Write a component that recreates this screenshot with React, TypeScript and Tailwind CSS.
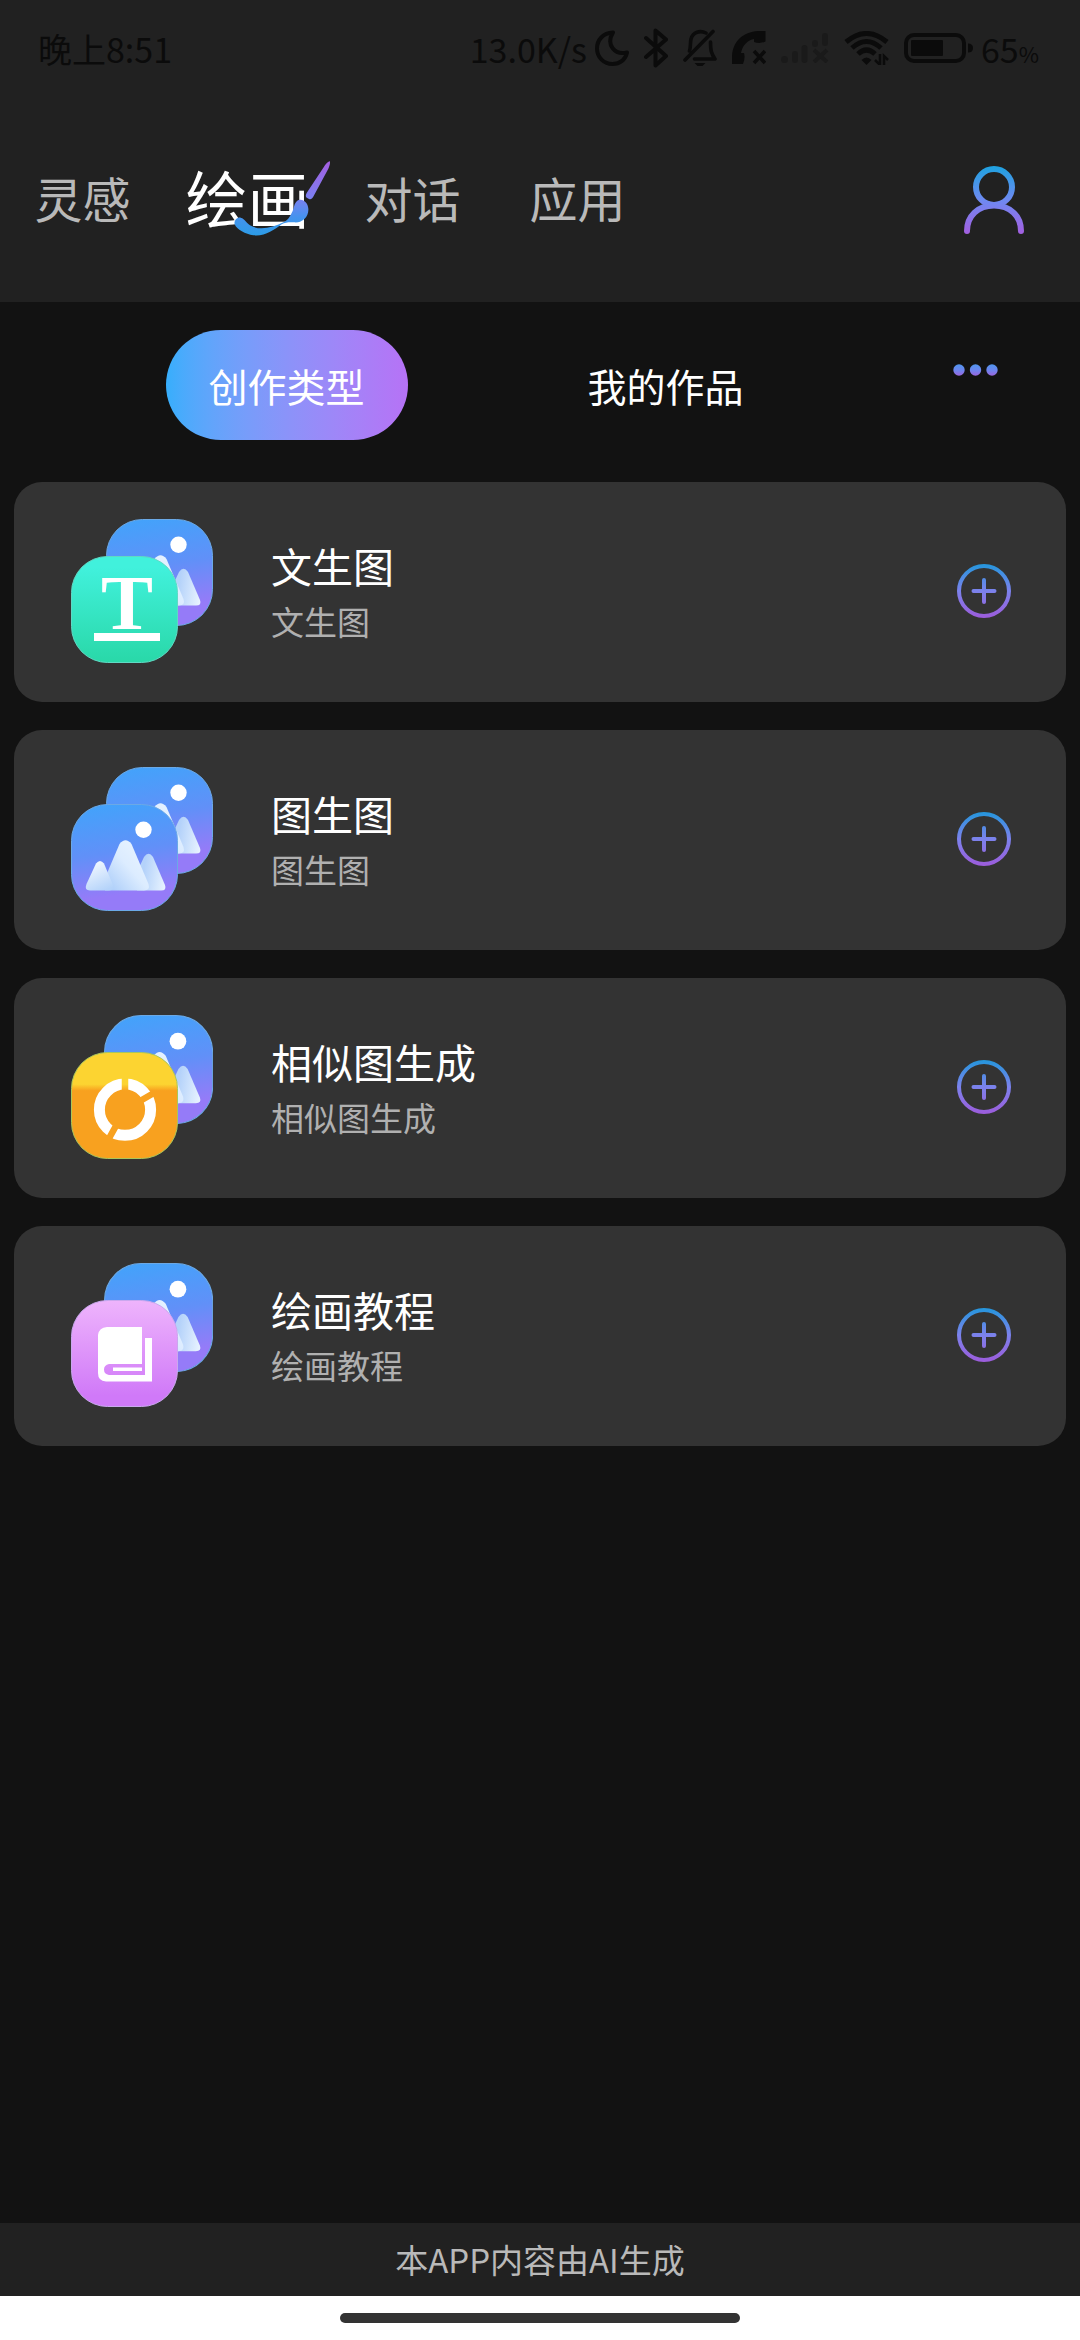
import { useState } from 'react'
import type { ReactNode } from 'react'

const tabs = ['灵感', '绘画', '对话', '应用']

const sections = ['创作类型', '我的作品']

const items = [
  { id: 'text', title: '文生图', description: '文生图' },
  { id: 'image', title: '图生图', description: '图生图' },
  { id: 'similar', title: '相似图生成', description: '相似图生成' },
  { id: 'tutorial', title: '绘画教程', description: '绘画教程' },
]

const Gradients = () => (
  <svg className="absolute h-0 w-0" aria-hidden="true">
    <defs>
      <linearGradient id="picture" x1="0" y1="0" x2="0.15" y2="1">
        <stop offset="0" stopColor="#40a4fb" />
        <stop offset="0.5" stopColor="#6190f8" />
        <stop offset="0.9" stopColor="#957bf8" />
      </linearGradient>
      <linearGradient id="peak" x1="0.3" y1="0" x2="0.7" y2="1">
        <stop offset="0" stopColor="#f4f9ff" />
        <stop offset="1" stopColor="#b4d3fa" />
      </linearGradient>
      <linearGradient id="peakFront" x1="1" y1="0.2" x2="0.2" y2="1">
        <stop offset="0" stopColor="#e9f4ff" />
        <stop offset="0.5" stopColor="#dcecff" />
        <stop offset="1" stopColor="#b0d0fa" />
      </linearGradient>
      <linearGradient id="peakSide" x1="0" y1="0.6" x2="1" y2="0.8">
        <stop offset="0.2" stopColor="#b4d2fa" />
        <stop offset="1" stopColor="#e8f3ff" />
      </linearGradient>
      <linearGradient id="green" x1="0" y1="0" x2="0" y2="1">
        <stop offset="0.1" stopColor="#41f1dc" />
        <stop offset="1" stopColor="#29d8a8" />
      </linearGradient>
      <linearGradient id="orange" x1="0" y1="0" x2="0" y2="1">
        <stop offset="0.3" stopColor="#fcd431" />
        <stop offset="0.36" stopColor="#f8a11f" />
      </linearGradient>
      <linearGradient id="pink" x1="0" y1="0" x2="0" y2="1">
        <stop offset="0" stopColor="#eeb4fc" />
        <stop offset="0.9" stopColor="#d079f8" />
      </linearGradient>
    </defs>
  </svg>
)

const MoonIcon = () => (
  <svg className="h-9 w-[34px]" viewBox="0 0 34 36" fill="none" stroke="currentColor" strokeWidth="4" strokeLinejoin="round">
    <path d="M18 2.5C8 3 2 10 2 18.500C2 27.500 9 34 17.500 34C25 34 30.500 29.500 32 22.500C20 25.500 10.500 15 18 2.500Z" />
  </svg>
)

const BluetoothIcon = () => (
  <svg className="h-10 w-6" viewBox="0 0 24 40" fill="none" stroke="currentColor" strokeWidth="4" strokeLinejoin="round" strokeLinecap="round">
    <path d="M2 10L22 28L11.500 37.500V2.500L22 11.500L2 29" />
  </svg>
)

const BellOffIcon = () => (
  <svg className="h-[38px] w-[34px]" viewBox="0 0 34 38" fill="none" stroke="currentColor" strokeWidth="3.6" strokeLinejoin="round" strokeLinecap="round">
    <path d="M2 31L30 2.500" />
    <path d="M6.500 22C8 17 7 14 8 10C10 3 17 1 23 4" />
    <path d="M27.500 13C27.500 21 28 24 32 30H11.500" />
    <path d="M11.500 34H22.500L19.500 37H14.500Z" fill="currentColor" stroke="none" />
  </svg>
)

const PhoneMissedIcon = () => (
  <svg className="h-[34px] w-[34px]" viewBox="0 0 34 34" fill="none">
    <path
      d="M0 33V25C1 10 11 1 26 0H33.500V10.500Q28 13 22 11V8C16 9 10.500 14 9 22H12Q13.500 27 11 33Z"
      fill="currentColor"
    />
    <path d="M22 20L33 32M33 20L22 32" stroke="currentColor" strokeWidth="3.6" />
  </svg>
)

const SignalIcon = () => (
  <svg className="h-[30px] w-12 text-[#1a1a1a]" viewBox="0 0 48 30" fill="currentColor">
    <circle cx="3.500" cy="26.500" r="3.500" />
    <rect x="11" y="18" width="6" height="12" rx="3" />
    <rect x="20.500" y="12" width="6" height="18" rx="3" />
    <rect x="31" y="7" width="6" height="7" rx="3" />
    <rect x="41" y="0" width="6" height="13" rx="3" />
    <path d="M33 17L46 29M46 17L33 29" stroke="currentColor" strokeWidth="4" />
  </svg>
)

const WifiIcon = () => (
  <svg className="h-[34px] w-[45px]" viewBox="0 0 45 34" fill="none" stroke="currentColor" strokeWidth="5">
    <path d="M2 11Q22.500 -6 43 11" />
    <path d="M8 17Q22.500 4 37 17" />
    <path d="M14 23Q22.500 15 31 23" />
    <path d="M17.500 29Q22.500 24 27.500 29L22.500 34Z" fill="currentColor" stroke="none" />
    <path d="M36 23V34L31 29M40 34V25L44 29" strokeWidth="2.500" />
  </svg>
)

const BatteryIcon = () => (
  <svg className="h-[30px] w-[69px]" viewBox="0 0 69 30" fill="none">
    <rect x="2" y="2" width="58" height="26" rx="8" stroke="currentColor" strokeWidth="4" />
    <rect x="7" y="7" width="32" height="16" rx="1" fill="currentColor" />
    <path d="M64 10.500Q69 10.500 69 15T64 19.500Z" fill="currentColor" />
  </svg>
)

const StatusBar = () => (
  <div className="flex h-[98px] items-center justify-between pb-0.5 pl-[38px] pr-[41px] text-[#0b0b0b]">
    <span className="text-[34px]">晚上8:51</span>
    <div className="flex items-center">
      <span className="mr-2 text-[34px]">13.0K/s</span>
      <div className="flex items-center gap-[15px]">
        <MoonIcon />
        <BluetoothIcon />
        <BellOffIcon />
        <PhoneMissedIcon />
        <SignalIcon />
        <WifiIcon />
        <BatteryIcon />
      </div>
      <span className="ml-2 text-[34px]">
        65<span className="text-[22px]">%</span>
      </span>
    </div>
  </div>
)

const Brush = () => (
  <svg className="absolute left-[69px] top-1 h-[75px] w-24" viewBox="0 0 288 225" aria-hidden="true">
    <defs>
      <linearGradient id="brush" gradientUnits="userSpaceOnUse" x1="0" y1="0" x2="0" y2="225">
        <stop offset="0" stopColor="#a45ee0" />
        <stop offset="0.5" stopColor="#7b80f2" />
        <stop offset="0.75" stopColor="#4593ee" />
        <stop offset="1" stopColor="#2b9ce6" />
      </linearGradient>
    </defs>
    <path
      fill="url(#brush)"
      d="M288 1C289 5 287 14 283 23L239 105C236 112 231 116 225 114L218 110C214 107 215 101 218 96L270 17C275 9 284 0 288 1Z"
    />
    <path
      fill="url(#brush)"
      d="M2 190C-1 180 8 168 20 170C34 173 36 188 54 196C82 209 118 199 150 183C165 175 170 162 176 150C181 137 181 123 194 117C210 113 222 128 223 143C225 168 204 187 180 184C168 183 155 183 143 190C120 207 92 227 58 223C35 220 8 206 2 190Z"
    />
  </svg>
)

const UserIcon = () => (
  <svg className="h-[68px] w-[60px]" viewBox="0 0 60 68" fill="none" aria-hidden="true">
    <defs>
      <linearGradient id="user" gradientUnits="userSpaceOnUse" x1="0" y1="0" x2="0" y2="68">
        <stop offset="0" stopColor="#1ea2e0" />
        <stop offset="0.5" stopColor="#6e8af2" />
        <stop offset="1" stopColor="#a35fe0" />
      </linearGradient>
    </defs>
    <g stroke="url(#user)" strokeWidth="6">
      <circle cx="30" cy="21" r="18" />
      <path d="M3 65C3 50 14 39.500 30 39.500S57 50 57 65" strokeLinecap="round" />
    </g>
  </svg>
)

const MoreIcon = () => (
  <svg className="h-3 w-[45px]" viewBox="0 0 45 12" aria-hidden="true">
    <defs>
      <linearGradient id="dots" x1="0" y1="0" x2="0" y2="1">
        <stop offset="0" stopColor="#4f95ee" />
        <stop offset="0.5" stopColor="#6c86ef" />
        <stop offset="1" stopColor="#9a66de" />
      </linearGradient>
    </defs>
    <circle cx="6" cy="6" r="5.700" fill="url(#dots)" />
    <circle cx="22.500" cy="6" r="5.700" fill="url(#dots)" />
    <circle cx="39" cy="6" r="5.700" fill="url(#dots)" />
  </svg>
)

const PlusIcon = () => (
  <svg className="h-[54px] w-[54px]" viewBox="0 0 54 54" fill="none" aria-hidden="true">
    <defs>
      <linearGradient id="plus" gradientUnits="userSpaceOnUse" x1="0" y1="0" x2="0" y2="54">
        <stop offset="0" stopColor="#2496dc" />
        <stop offset="0.5" stopColor="#7c82ec" />
        <stop offset="1" stopColor="#9c5cdb" />
      </linearGradient>
    </defs>
    <g stroke="url(#plus)" strokeWidth="4" strokeLinecap="round">
      <circle cx="27" cy="27" r="25" />
      <path d="M16.500 27H37.500M27 16L27.010 38" />
    </g>
  </svg>
)

const Picture = () => (
  <>
    <rect x="0.5" y="0.5" width="106" height="106" rx="36" fill="url(#picture)" stroke="#6ba9e6" />
    <circle cx="72.500" cy="25.700" r="8.200" fill="#fff" />
    <path
      d="M73 53Q77.500 46.500 82 53L94 81Q96 86.500 90 86.500H66V68Z"
      fill="url(#peakSide)"
    />
    <path
      d="M48.500 40Q54.500 32.500 60.500 40L77.500 80Q79.500 86.500 73 86.500H34V74Z"
      fill="url(#peakFront)"
    />
    <path
      d="M25 59.500Q29 54.500 33 59.500L41.500 80Q43.500 86.500 38 86.500H19Q13 86.500 15.500 80Z"
      fill="url(#peak)"
    />
  </>
)

const fronts: Record<string, ReactNode> = {
  text: (
    <>
      <rect x="0.500" y="37.500" width="106" height="106" rx="36" fill="url(#green)" stroke="#5fd9c4" />
      <text x="56" y="110" textAnchor="middle" fill="#fff" className="font-['Liberation_Serif',serif] text-[78px] font-bold">
        T
      </text>
      <rect x="23" y="114" width="66" height="8" fill="#fff" />
    </>
  ),
  image: (
    <g transform="translate(0 37)">
      <Picture />
    </g>
  ),
  similar: (
    <>
      <rect x="0.500" y="37.500" width="106" height="106" rx="36" fill="url(#orange)" stroke="#a9c65c" />
      <mask id="ringGaps" maskUnits="userSpaceOnUse" x="0" y="37" width="107" height="107">
        <rect y="37" width="107" height="107" fill="#fff" />
        <path d="M54 94.700V60M54 94.700L88 75M54 94.700L36 127" stroke="#000" strokeWidth="6.500" />
      </mask>
      <circle cx="54" cy="94.700" r="25.600" fill="none" stroke="#fff" strokeWidth="11" mask="url(#ringGaps)" />
    </>
  ),
  tutorial: (
    <>
      <rect x="0.500" y="37.500" width="106" height="106" rx="36" fill="url(#pink)" stroke="#c9a8ee" />
      <path
        fill="#fff"
        fillRule="evenodd"
        d="M36 64H71V101H38Q33 102 33 106.500T38 112H74V75H81V118.500H35Q27 118 27 110V72Q28 64.500 36 64Z"
      />
      <rect x="42" y="104.500" width="29" height="3.500" fill="#fff" />
    </>
  ),
}

const ItemIcon = ({ id }: { id: string }) => (
  <svg className="h-36 w-[142px] shrink-0" viewBox="0 0 142 144" aria-hidden="true">
    <g transform={id === 'similar' || id === 'tutorial' ? 'translate(33 0) scale(1.020)' : 'translate(35 0)'}>
      <Picture />
    </g>
    {fronts[id]}
  </svg>
)

const App = () => {
  const [tab, setTab] = useState('绘画')
  const [section, setSection] = useState('创作类型')

  return (
    <div className="flex min-h-screen flex-col bg-[#121212] font-['Noto_Sans_CJK_SC',sans-serif] text-white">
      <Gradients />
      <header className="bg-[#212121]">
        <StatusBar />
        <div className="flex h-[204px] items-center justify-between pr-14">
          <nav className="flex items-center pb-1.5">
            {tabs.map((t) => (
              <button
                key={t}
                type="button"
                onClick={() => setTab(t)}
                className={
                  t === tab
                    ? 'relative w-[165px] text-[62px] leading-[80px]'
                    : 'w-[165px] text-[48px] leading-[80px] text-[#b9b9b9]'
                }
              >
                {t}
                {t === tab && <Brush />}
              </button>
            ))}
          </nav>
          <button type="button" aria-label="我的">
            <UserIcon />
          </button>
        </div>
      </header>

      <main className="flex-1 px-3.5 pt-7">
        <div className="flex pl-[83px]">
          {sections.map((s) => (
            <div key={s} className="flex flex-1 justify-center">
              <button
                type="button"
                onClick={() => setSection(s)}
                className={
                  s === section
                    ? 'h-[110px] w-[242px] rounded-full bg-linear-to-r from-[#36aefc] to-[#b672f6] text-[39px]'
                    : 'h-[110px] w-[242px] text-[39px]'
                }
              >
                {s}
              </button>
            </div>
          ))}
          <div className="w-[211px] pl-[98px] pt-[34px]">
            <button type="button" aria-label="更多" className="flex">
              <MoreIcon />
            </button>
          </div>
        </div>

        <ul className="mt-[42px] grid gap-7">
          {items.map((item) => (
            <li key={item.id} className="flex h-[220px] items-center rounded-[28px] bg-[#333333] pb-0.5 pl-[57px] pr-[55px]">
              <ItemIcon id={item.id} />
              <div className="ml-[58px] flex-1">
                <h2 className="text-[41px] leading-[60px]">{item.title}</h2>
                <p className="text-[33px] leading-[52px] text-[#b0b0b0]">{item.description}</p>
              </div>
              <button type="button" aria-label={item.title}>
                <PlusIcon />
              </button>
            </li>
          ))}
        </ul>
      </main>

      <footer>
        <p className="bg-[#212121] text-center text-[33px] leading-[73px] text-[#b9b9b9]">本APP内容由AI生成</p>
        <div className="flex h-11 items-center justify-center bg-white">
          <div className="h-2.5 w-[37%] rounded-full bg-[#333333]" />
        </div>
      </footer>
    </div>
  )
}

export default App
